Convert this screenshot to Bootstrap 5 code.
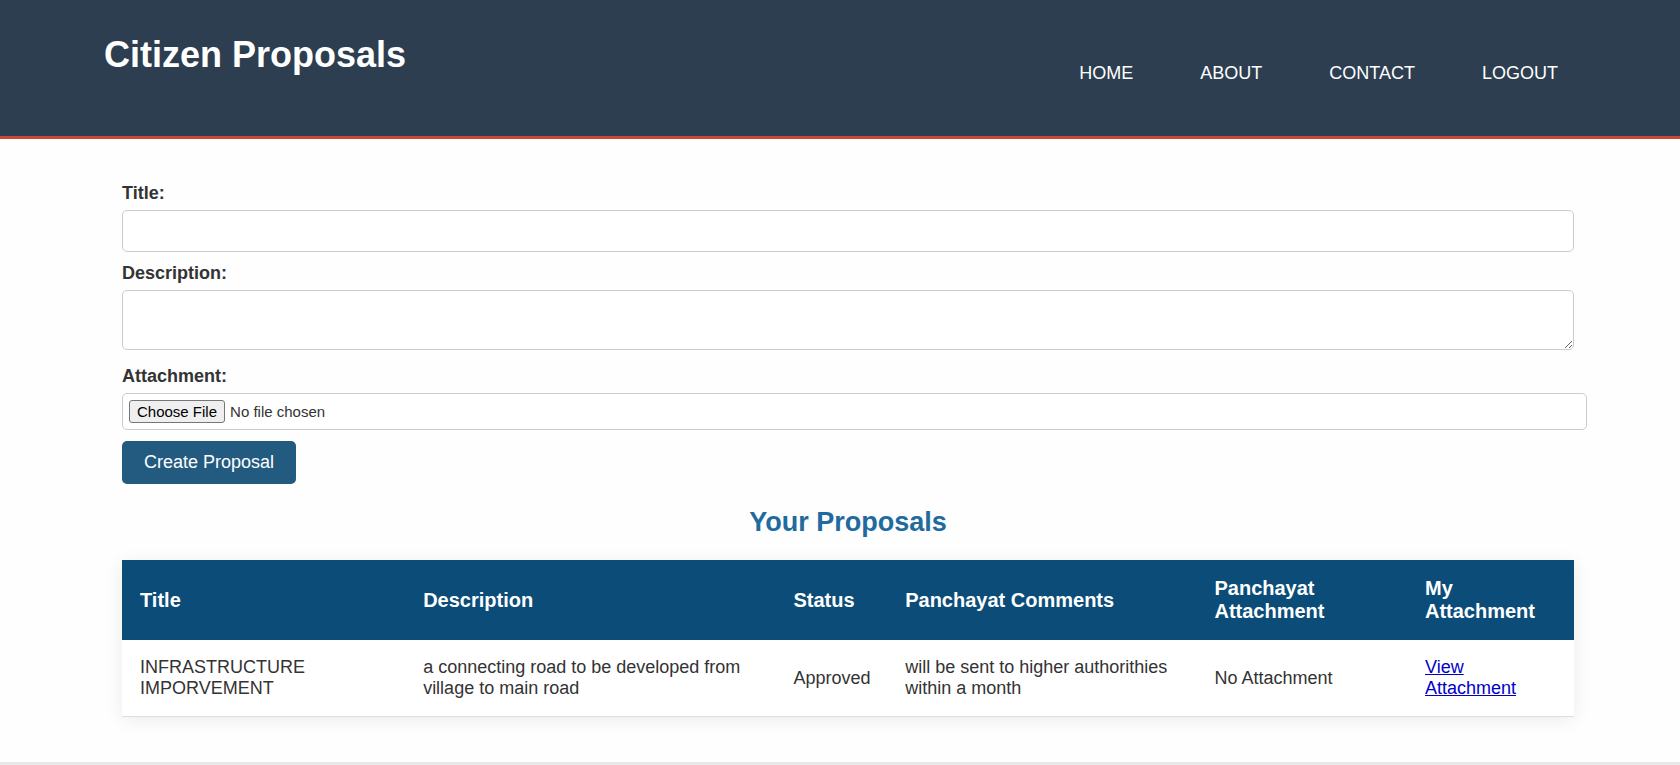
<!DOCTYPE html>
<html lang="en">
<head>
<meta charset="utf-8">
<meta name="viewport" content="width=device-width, initial-scale=1">
<title>Citizen Proposals</title>
<link href="https://cdn.jsdelivr.net/npm/bootstrap@5.3.0/dist/css/bootstrap.min.css" rel="stylesheet">
<style>
  body { font-family: "Liberation Sans", Arial, sans-serif; font-size: 18px; line-height: 21px; color: #333; background: #fefefe; }
  .site-header { background: #2c3e50; border-bottom: 3px solid #c84b31; padding: 34px 102px 52px 104px; }
  .site-title { font-size: 36px; line-height: 42px; }
  .site-nav { gap: 67px; padding: 29px 20px 0 0; }
  .site-nav .nav-link { padding: 0; color: #fff; }
  .page-main { padding: 44px 106px 45px 122px; }
  .field-label { margin-bottom: 6px; }
  .page-main .form-control { border-color: #ccc; border-radius: 5px; }
  .title-box { height: 42px; margin-bottom: 11px; }
  .page-main .text-area { height: 60px; min-height: 60px; margin-bottom: 16px; }
  .page-main .file-box { width: calc(100% + 13px); margin-bottom: 11px; padding: 6px; font-size: 15px; line-height: 17px; color: #333; height: 37px; }
  .page-main .file-box::file-selector-button { margin: 0 5px 0 0; padding: 2px 7px; border: 1px solid #767676; border-radius: 3px; background: #efefef; color: #000; font-size: 15px; line-height: 17px; }
  .create-btn, .create-btn:hover { background: #235b80; color: #fff; font-size: 18px; line-height: 21px; padding: 11px 22px; border: 0; border-radius: 5px; }
  .list-heading { font-size: 27px; line-height: 32px; color: #206a9e; margin: 22px 0; }
  .proposal-table { table-layout: fixed; color: #333; box-shadow: 0 3px 17px rgba(0,0,0,.08); }
  .proposal-table > :not(caption) > * > * { padding: 17px 18px; }
  .proposal-table > thead > tr > th { background: #0b4d78; color: #fff; font-size: 20px; line-height: 23px; border: 0; vertical-align: middle; }
  .proposal-table > tbody > tr > td { background: #fff; border-bottom: 1px solid #ddd; }
  .proposal-table a { color: #0000c8; }
  .c-title { width: 19.5%; } .c-desc { width: 25.5%; } .c-status { width: 7.7%; }
  .c-comment { width: 21.3%; } .c-pfile { width: 14.5%; } .c-mine { width: 11.5%; }
  .site-footer { height: 3px; background: #e9e9e9; }
</style>
</head>
<body>
<header class="site-header d-flex justify-content-between align-items-start">
  <h1 class="site-title fw-bold text-white mb-0">Citizen Proposals</h1>
  <nav aria-label="Main">
    <ul class="nav site-nav text-uppercase">
      <li class="nav-item"><a class="nav-link" href="#">Home</a></li>
      <li class="nav-item"><a class="nav-link" href="#">About</a></li>
      <li class="nav-item"><a class="nav-link" href="#">Contact</a></li>
      <li class="nav-item"><a class="nav-link" href="#">Logout</a></li>
    </ul>
  </nav>
</header>
<main class="page-main">
  <form>
    <label class="field-label d-block fw-bold" for="title">Title:</label>
    <input class="form-control title-box" type="text" id="title">
    <label class="field-label d-block fw-bold" for="description">Description:</label>
    <textarea class="form-control text-area" id="description"></textarea>
    <label class="field-label d-block fw-bold" for="attachment">Attachment:</label>
    <input class="form-control file-box" type="file" id="attachment">
    <button class="btn create-btn" type="submit">Create Proposal</button>
  </form>
  <h2 class="list-heading fw-bold text-center">Your Proposals</h2>
  <table class="table proposal-table align-middle mb-0">
    <colgroup><col class="c-title"><col class="c-desc"><col class="c-status"><col class="c-comment"><col class="c-pfile"><col class="c-mine"></colgroup>
    <thead>
      <tr><th>Title</th><th>Description</th><th>Status</th><th>Panchayat Comments</th><th>Panchayat Attachment</th><th>My Attachment</th></tr>
    </thead>
    <tbody>
      <tr>
        <td>INFRASTRUCTURE IMPORVEMENT</td>
        <td>a connecting road to be developed from village to main road</td>
        <td>Approved</td>
        <td>will be sent to higher authorithies within a month</td>
        <td>No Attachment</td>
        <td><a href="#">View Attachment</a></td>
      </tr>
    </tbody>
  </table>
</main>
<footer class="site-footer"></footer>
<script src="https://cdn.jsdelivr.net/npm/bootstrap@5.3.0/dist/js/bootstrap.bundle.min.js"></script>
</body>
</html>
